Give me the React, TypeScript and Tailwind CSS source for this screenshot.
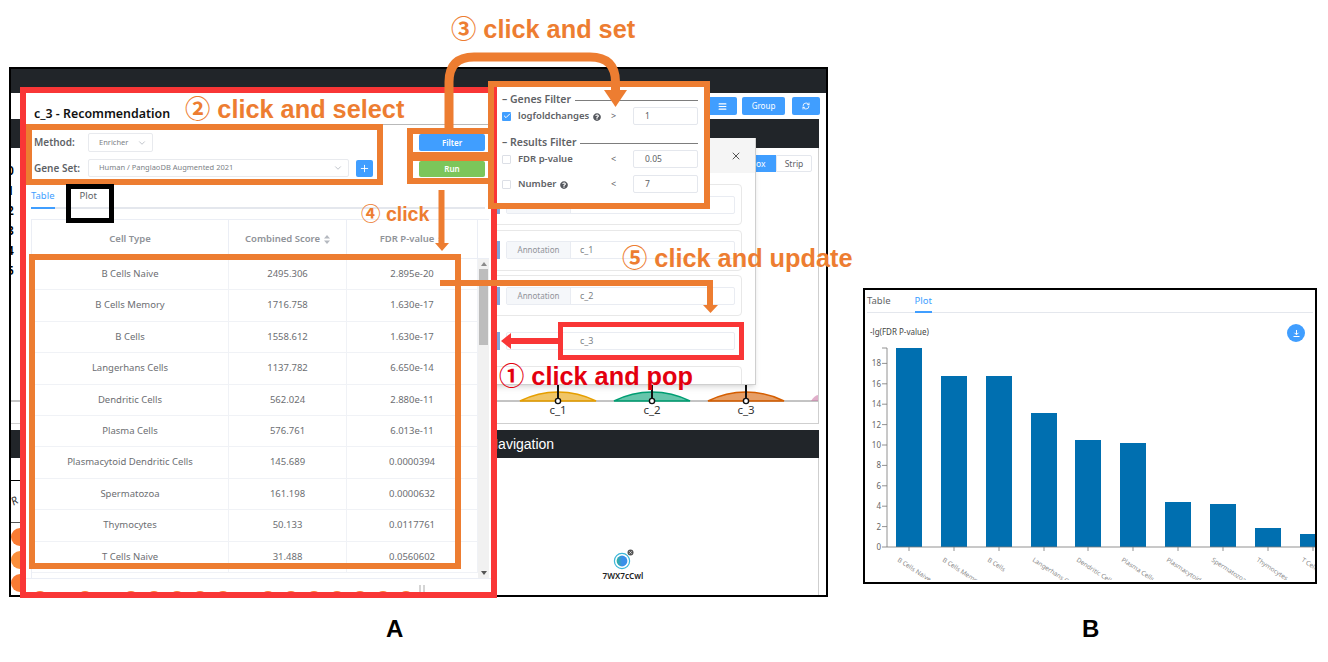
import React from 'react';
import { AlignJustify, Check, ChevronDown, Plus, RefreshCw, X } from 'lucide-react';
import { FaQuestionCircle } from 'react-icons/fa';

const rows = [
  ['B Cells Naive', '2495.306', '2.895e-20'],
  ['B Cells Memory', '1716.758', '1.630e-17'],
  ['B Cells', '1558.612', '1.630e-17'],
  ['Langerhans Cells', '1137.782', '6.650e-14'],
  ['Dendritic Cells', '562.024', '2.880e-11'],
  ['Plasma Cells', '576.761', '6.013e-11'],
  ['Plasmacytoid Dendritic Cells', '145.689', '0.0000394'],
  ['Spermatozoa', '161.198', '0.0000632'],
  ['Thymocytes', '50.133', '0.0117761'],
  ['T Cells Naive', '31.488', '0.0560602'],
];

const bars = [
  { x: 31, top: 3, label: 'B Cells Naive' },
  { x: 76, top: 31, label: 'B Cells Memory' },
  { x: 121, top: 31, label: 'B Cells' },
  { x: 166, top: 68, label: 'Langerhans Cells' },
  { x: 210, top: 95, label: 'Dendritic Cells' },
  { x: 255, top: 98, label: 'Plasma Cells' },
  { x: 300, top: 157, label: 'Plasmacytoid Dendritic' },
  { x: 345, top: 159, label: 'Spermatozoa' },
  { x: 390, top: 183, label: 'Thymocytes' },
  { x: 435, top: 189, label: 'T Cells Naive' },
];

const yTicks = [0, 2, 4, 6, 8, 10, 12, 14, 16, 18];

const SortIcon = () => (
  <svg width="6" height="9" viewBox="0 0 6 9" fill="#b5b9c0">
    <path d="M3 0 L6 3.5 H0 Z M3 9 L0 5.5 H6 Z" />
  </svg>
);

const Mountain = ({ cx, color, label }: { cx: number; color: string; label: string }) => (
  <g>
    <path d={`M${cx - 38} 21 Q${cx - 20} 12 ${cx} 12 Q${cx + 20} 12 ${cx + 38} 21 Z`} fill={color} fillOpacity={0.6} stroke={color} strokeWidth={1.5} />
    <line x1={cx} y1={0} x2={cx} y2={21} stroke="#111" strokeWidth={2} />
    <circle cx={cx} cy={21} r={2.6} fill="#fff" stroke="#111" strokeWidth={1.4} />
    <text x={cx} y={34} textAnchor="middle" fontSize={11.5} fill="#333">{label}</text>
  </g>
);

const AnnotationCard = ({ value, blank }: { value: string; blank?: boolean }) => (
  <div className={`h-[41px] flex items-center rounded-[4px] border ${blank ? 'border-transparent' : 'border-[#e8e8e8]'}`}>
    <div className="ml-[20px] w-[3px] h-[18px] bg-[#7fa5dc]" />
    <div className="ml-[6px] w-[229px] h-[18px] flex rounded-[2px] border border-[#e9ecf2] text-[8px] leading-[16px]">
      {blank ? (
        <div className="w-[64px] shrink-0" />
      ) : (
        <div className="w-[64px] shrink-0 bg-[#f5f7fa] text-center text-[#909399] border-r border-[#e9ecf2]">Annotation</div>
      )}
      <div className="pl-[9px] text-[#7c7f86] text-[9px]">{value}</div>
    </div>
  </div>
);

const FilterInput = ({ value }: { value: string }) => (
  <div className="w-[65px] h-[18px] rounded-[2px] border border-[#e4e7ed] pl-[11px] text-[8.5px] leading-[16px] text-[#606266]">{value}</div>
);

const FilterHeading = ({ title, className }: { title: string; className: string }) => (
  <div className={`h-[16px] pt-[2px] flex items-center gap-[4px] text-[10.5px] font-semibold text-[#606266] ${className}`}>
    <span className="whitespace-nowrap">– {title}</span>
    <div className="flex-1 h-px bg-[#7d7d7d]" />
  </div>
);

const FilterRow = ({ label, op, value, checked, help, className }: { label: string; op: string; value: string; checked?: boolean; help?: boolean; className?: string }) => (
  <div className={`h-[18px] grid grid-cols-[16px_93px_22px_65px] items-center text-[#606266] ${className ?? ''}`}>
    {checked ? (
      <div className="w-[9px] h-[9px] rounded-[1px] bg-[#409eff] flex items-center justify-center">
        <Check size={8} strokeWidth={3} className="text-white" />
      </div>
    ) : (
      <div className="w-[9px] h-[9px] rounded-[1px] border border-[#dcdfe6]" />
    )}
    <div className="pt-[1px] flex items-center gap-[4px] text-[9.5px] font-semibold whitespace-nowrap">
      {label}
      {help && <FaQuestionCircle size={8} className="text-[#55585e]" />}
    </div>
    <div className="text-[9px]">{op}</div>
    <FilterInput value={value} />
  </div>
);

// step callouts sit on top of the screenshots, so they are placed on the canvas
const calloutClass = "absolute whitespace-nowrap leading-[28px] font-bold [font-family:'Liberation_Sans','Noto_Sans_CJK_SC',sans-serif]";

export default function App() {
  return (
    <div className="relative w-[1328px] h-[662px] overflow-hidden bg-white flex font-['Noto_Sans']">
      {/* A: main window */}
      <div className="ml-[9px] pt-[67px] w-[819px] shrink-0">
        <div className="w-[819px] h-[530px] border-2 border-black bg-white flex flex-col overflow-hidden">
          <div className="h-[24px] bg-[#212529] shrink-0" />
          <div className="h-[26px] shrink-0 flex justify-end items-center gap-[5px] pr-[6px]">
            <div className="w-[29px] h-[18px] rounded-[2px] bg-[#409eff] flex items-center justify-center">
              <AlignJustify size={9} strokeWidth={3} className="text-white" />
            </div>
            <div className="w-[43px] h-[18px] rounded-[2px] bg-[#409eff] text-white text-[8px] leading-[18px] text-center">Group</div>
            <div className="ml-[2px] w-[28px] h-[18px] rounded-[2px] bg-[#409eff] flex items-center justify-center">
              <RefreshCw size={8} strokeWidth={2.5} className="text-white" />
            </div>
          </div>

          <div className="mr-[7px] flex flex-col">
            <div className="h-[29px] bg-[#212529]" />
            <div className="h-[276px] flex flex-col border-r border-b border-[#cfcfcf] overflow-hidden">
              <div className="flex justify-between items-start">
                <div className="pt-[13px] -ml-[4px] w-[9px] overflow-hidden text-[12px] leading-[20px] font-semibold text-black">
                  {['0', '1', '2', '3', '4', '5'].map((n) => (
                    <div key={n}>{n}</div>
                  ))}
                </div>
                <div className="mt-[7px] mr-[6px] flex h-[17px] text-[8.5px] leading-[17px]">
                  <div className="w-[36px] bg-[#409eff] text-white text-center rounded-l-[2px]">Box</div>
                  <div className="w-[36px] border border-[#e4e7ed] text-[#606266] text-center leading-[15px] rounded-r-[2px]">Strip</div>
                </div>
              </div>
              <svg className="mt-auto shrink-0 mb-[3px]" width="807" height="40" viewBox="0 0 807 40">
                <line x1="0" y1="21" x2="807" y2="21" stroke="#888" strokeWidth="1" />
                <path d="M800 21 Q804 15 808 15 V21 Z" fill="#CC79A7" fillOpacity="0.6" />
                <Mountain cx={547} color="#E69F00" label="c_1" />
                <Mountain cx={641} color="#009E73" label="c_2" />
                <Mountain cx={735} color="#D55E00" label="c_3" />
              </svg>
            </div>

            <div className="mt-[6px] h-[28px] bg-[#212529] text-white text-[14px] leading-[28px] pl-[477px] font-['Liberation_Sans',sans-serif]">
              Navigation
            </div>
            <div className="relative h-[137px] flex border-r border-[#cfcfcf]">
              <div className="w-[9px] overflow-hidden flex flex-col">
                <div className="h-[23px] shrink-0 border-b border-black" />
                <div className="mt-[12px] text-[11px] leading-[14px] italic text-[#333] rotate-[-30deg]">R</div>
                <div className="mt-[15px] h-[3px] border-t border-[#555]" />
                <div className="mt-[3px] flex flex-col gap-[5px]">
                  <div className="w-[18px] h-[18px] rounded-full bg-[#f97b33]" />
                  <div className="w-[18px] h-[18px] rounded-full bg-[#fb8f3c]" />
                  <div className="w-[18px] h-[18px] rounded-full bg-[#f97b33]" />
                </div>
              </div>
              {/* graph node */}
              <div className="absolute left-[583px] top-[90px] w-[60px] flex flex-col items-center">
                <svg width="24" height="22" viewBox="0 0 24 22">
                  <defs>
                    <linearGradient id="nodeFill" x1="0" y1="0" x2="1" y2="0">
                      <stop offset="0" stopColor="#2fb59a" />
                      <stop offset="0.5" stopColor="#3a8fe8" />
                    </linearGradient>
                  </defs>
                  <circle cx="10" cy="13" r="7.6" fill="none" stroke="#3ab6d8" strokeWidth="1.2" />
                  <circle cx="10" cy="13" r="5.4" fill="url(#nodeFill)" />
                  <circle cx="18.5" cy="4.5" r="3" fill="#555" />
                  <path d="M17.3 3.3 L19.7 5.7 M19.7 3.3 L17.3 5.7" stroke="#ddd" strokeWidth="0.8" />
                </svg>
                <div className="text-[8.2px] leading-[12px] font-semibold text-[#222] whitespace-nowrap -ml-[2px]">7WX7cCwl</div>
              </div>
            </div>
          </div>
        </div>
        <div className="mt-[18px] pl-[377px] text-[24px] leading-[28px] font-bold text-black font-['Liberation_Sans',sans-serif]">A</div>
      </div>

      {/* B: plot tab */}
      <div className="ml-[35px] pt-[288px] w-[454px] shrink-0">
        <div className="w-[454px] h-[296px] border-2 border-black bg-white overflow-hidden">
          <div className="mx-[2px] h-[23px] flex gap-[24px] border-b border-[#e4e7ed] text-[9.5px] leading-[21px]">
            <div className="text-[#606266]">Table</div>
            <div className="text-[#409eff] border-b-2 border-[#409eff] h-[23px]">Plot</div>
          </div>
          <div className="h-[32px] flex justify-between items-start pt-[12px] pl-[5px] pr-[10px] text-[8px] leading-[14px] text-[#444]">
            <span>-lg(FDR P-value)</span>
            <div className="w-[18px] h-[18px] rounded-full bg-[#409eff] flex items-center justify-center -mt-[1px]">
              <svg width="9" height="9" viewBox="0 0 9 9" fill="none" stroke="#fff" strokeWidth="1">
                <path d="M4.5 1 V5.5 M2.5 3.8 L4.5 5.8 L6.5 3.8 M1.5 7.5 H7.5" />
              </svg>
            </div>
          </div>
          <svg width="450" height="235" viewBox="0 0 450 235" className="block">
            {bars.map((b) => (
              <g key={b.label}>
                <rect x={b.x} y={b.top} width={26} height={202 - b.top} fill="#006fb0" />
                <line x1={b.x + 13} y1={202} x2={b.x + 13} y2={206} stroke="#777" strokeWidth={0.8} />
                <text x={b.x + 1} y={216} fontSize={6.4} fill="#8a8a8a" transform={`rotate(33 ${b.x + 1} 216)`}>{b.label}</text>
              </g>
            ))}
            <line x1="22" y1="3" x2="22" y2="202" stroke="#777" strokeWidth="0.8" />
            <line x1="22" y1="202" x2="450" y2="202" stroke="#777" strokeWidth="0.8" />
            <line x1="17" y1="3" x2="22" y2="3" stroke="#777" strokeWidth="0.8" />
            {yTicks.map((t) => {
              const y = 202 - t * 10.2;
              return (
                <g key={t}>
                  <line x1="17" y1={y} x2="22" y2={y} stroke="#777" strokeWidth="0.8" />
                  <text x="16" y={y + 3} textAnchor="end" fontSize={8} fill="#666">{t}</text>
                </g>
              );
            })}
          </svg>
        </div>
        <div className="mt-[31px] pl-[219px] text-[24px] leading-[28px] font-bold text-black font-['Liberation_Sans',sans-serif]">B</div>
      </div>

      {/* annotation modal behind the recommendation dialog */}
      <div className="absolute left-[470px] top-[138px] w-[286px] h-[247px] bg-white border-r border-b border-[#cfcfcf] shadow-md overflow-hidden">
        <div className="h-[35px] bg-[#f5f5f5] flex justify-end items-center pr-[13px]">
          <X size={12} className="text-[#555]" />
        </div>
        <div className="mt-[11px] ml-[6px] mr-[13px] flex flex-col gap-[4.5px]">
          <AnnotationCard value="" />
          <AnnotationCard value="c_1" />
          <AnnotationCard value="c_2" />
          <AnnotationCard value="c_3" blank />
          <div className="h-[41px] rounded-[4px] border border-[#e8e8e8]" />
        </div>
      </div>

      {/* recommendation dialog */}
      <div className="absolute left-[20px] top-[87px] w-[477px] h-[511px] border-[6px] border-[#f93636] bg-white flex flex-col overflow-hidden text-[#606266]">
        <div className="h-[32px] shrink-0 pl-[8px] pt-[9px] border-b border-[#b9b9b9] text-[12.4px] leading-[24px] font-semibold text-[#111]">
          c_3 - Recommendation
        </div>
        <div className="shrink-0 flex pt-[8px]">
          <div className="pl-[8px] flex flex-col gap-[7px]">
            <div className="flex h-[19px] items-center">
              <div className="w-[54px] text-[10px] font-semibold">Method:</div>
              <div className="w-[65px] h-[19px] pl-[10px] pr-[5px] rounded-[2px] border border-[#e8eaee] flex items-center justify-between text-[7.5px] text-[#7c7f86]">
                Enricher
                <ChevronDown size={10} className="text-[#b5b9c0]" />
              </div>
            </div>
            <div className="flex h-[18px] items-center">
              <div className="w-[54px] text-[10px] font-semibold">Gene Set:</div>
              <div className="w-[261px] h-[18px] pl-[10px] pr-[5px] rounded-[2px] border border-[#e8eaee] flex items-center justify-between text-[7.5px] text-[#7c7f86]">
                Human / PanglaoDB Augmented 2021
                <ChevronDown size={10} className="text-[#b5b9c0]" />
              </div>
              <div className="ml-[7px] w-[17px] h-[17px] rounded-[2px] bg-[#409eff] flex items-center justify-center">
                <Plus size={11} className="text-white" />
              </div>
            </div>
          </div>
          <div className="ml-auto mr-[6px] w-[66px] flex flex-col gap-[10px] pt-[1px] text-white text-[8px] font-semibold text-center">
            <div className="h-[17px] leading-[17px] rounded-[2px] bg-[#409eff]">Filter</div>
            <div className="h-[16px] leading-[16px] rounded-[2px] bg-[#7cc65a]">Run</div>
          </div>
        </div>

        <div className="shrink-0 mt-[10px] ml-[5px] mr-[6px] h-[22px] flex gap-[25px] border-b-2 border-[#e4e7ed] text-[9.5px] leading-[18px]">
          <div className="h-[22px] text-[#409eff] border-b-2 border-[#409eff]">Table</div>
          <div className="text-[#606266]">Plot</div>
        </div>

        <div className="shrink-0 mt-[10px] ml-[5px] w-[458px] border-t border-l border-[#ebeef5] flex flex-col">
          <div className="h-[39px] grid grid-cols-[197px_118px_131px_12px] items-center text-[9.5px] font-semibold text-[#909399] text-center border-b border-[#ebeef5]">
            <div className="h-full flex items-center justify-center border-r border-[#ebeef5]">Cell Type</div>
            <div className="h-full flex items-center justify-center gap-[4px] border-r border-[#ebeef5]">
              Combined Score
              <SortIcon />
            </div>
            <div className="h-full flex items-center justify-center gap-[4px] border-r border-[#ebeef5]">
              FDR P-value
              <SortIcon />
            </div>
            <div />
          </div>
          <div className="flex h-[319px] overflow-hidden">
            <div className="w-[446px] shrink-0">
              {rows.map((r) => (
                <div key={r[0]} className="h-[31.4px] grid grid-cols-[197px_118px_131px] items-center text-center text-[9.5px] text-[#6c6e72] border-b border-[#f0f2f6]">
                  <div className="h-full flex items-center justify-center border-r border-[#f0f2f6]">{r[0]}</div>
                  <div className="h-full flex items-center justify-center border-r border-[#f0f2f6]">{r[1]}</div>
                  <div className="h-full flex items-center justify-center border-r border-[#f0f2f6]">{r[2]}</div>
                </div>
              ))}
            </div>
            <div className="w-[12px] bg-[#f1f1f1] flex flex-col items-center">
              <svg className="mt-[3px] shrink-0" width="6" height="4" viewBox="0 0 6 4" fill="#8a8a8a"><path d="M3 0 L6 4 H0 Z" /></svg>
              <div className="mt-[3px] w-[9px] h-[76px] bg-[#bdbdbd]" />
              <svg className="mt-auto mb-[3px] shrink-0" width="6" height="4" viewBox="0 0 6 4" fill="#555"><path d="M3 4 L0 0 H6 Z" /></svg>
            </div>
          </div>
        </div>
        <div className="flex-1 border-t border-[#ebeef5] overflow-hidden relative">
          <svg width="465" height="14" viewBox="0 0 465 14" className="block">
            {[14, 59, 105, 128, 151, 174, 197, 242, 265, 288, 311, 334, 357, 380].map((x) => (
              <circle key={x} cx={x} cy={20} r={8} fill="#f97b33" />
            ))}
            <path d="M394 6 V14 M398 6 V14" stroke="#aaa" strokeWidth="1" />
          </svg>
        </div>
      </div>

      {/* filter popover */}
      <div className="absolute left-[488px] top-[81px] w-[222px] h-[128px] border-[6px] border-[#ed7d31] bg-white">
        <div className="h-full border-l-[3px] border-[#f93636] pl-[5px] pr-[6px] overflow-hidden">
          <FilterHeading title="Genes Filter" className="mt-[4px]" />
          <FilterRow label="logfoldchanges" op=">" value="1" checked help />
          <FilterHeading title="Results Filter" className="mt-[9px]" />
          <FilterRow label="FDR p-value" op="<" value="0.05" />
          <FilterRow label="Number" op="<" value="7" help className="mt-[7px]" />
        </div>
      </div>

      {/* orange and black marker boxes */}
      <div className="absolute left-[26px] top-[124px] w-[357px] h-[61px] border-[6px] border-[#ed7d31]" />
      <div className="absolute left-[407px] top-[128px] w-[87px] h-[56px] border-[6px] border-[#ed7d31]" />
      <div className="absolute left-[407px] top-[152px] w-[87px] h-[9px] bg-[#ed7d31]" />
      <div className="absolute left-[29px] top-[254px] w-[432px] h-[315px] border-[6px] border-[#ed7d31]" />
      <div className="absolute left-[66px] top-[184px] w-[48px] h-[39px] border-[5px] border-black" />
      <div className="absolute left-[558px] top-[322px] w-[186px] h-[38px] border-[5px] border-[#f93636]" />

      {/* arrows */}
      <svg className="absolute left-0 top-0 pointer-events-none" width="1328" height="662" viewBox="0 0 1328 662">
        <path d="M449 128 V82 Q449 57 474 57 H590 Q615.5 57 615.5 82 V92" fill="none" stroke="#ed7d31" strokeWidth="9" />
        <path d="M604 90 H627 L615.5 107 Z" fill="#ed7d31" />
        <path d="M441.5 190 V244" fill="none" stroke="#ed7d31" strokeWidth="6" />
        <path d="M435 243 H449 L442 251 Z" fill="#ed7d31" />
        <path d="M440 283 H710 V306" fill="none" stroke="#ed7d31" strokeWidth="6" />
        <path d="M703 305 H718 L710.5 313 Z" fill="#ed7d31" />
        <path d="M558 341 H508" fill="none" stroke="#f93636" strokeWidth="6" />
        <path d="M511 333 V349 L501 341 Z" fill="#f93636" />
      </svg>

      <div className={`${calloutClass} text-[25.3px] left-[451px] top-[15px] text-[#ed7d31]`}>③ click and set</div>
      <div className={`${calloutClass} text-[25.3px] left-[185px] top-[95px] text-[#ed7d31]`}>② click and select</div>
      <div className={`${calloutClass} text-[19.5px] left-[361px] top-[200px] text-[#ed7d31]`}>④ click</div>
      <div className={`${calloutClass} text-[25.3px] left-[622px] top-[244px] text-[#ed7d31]`}>⑤ click and update</div>
      <div className={`${calloutClass} text-[25.3px] left-[499px] top-[362px] text-[#e3000f]`}>① click and pop</div>
    </div>
  );
}
